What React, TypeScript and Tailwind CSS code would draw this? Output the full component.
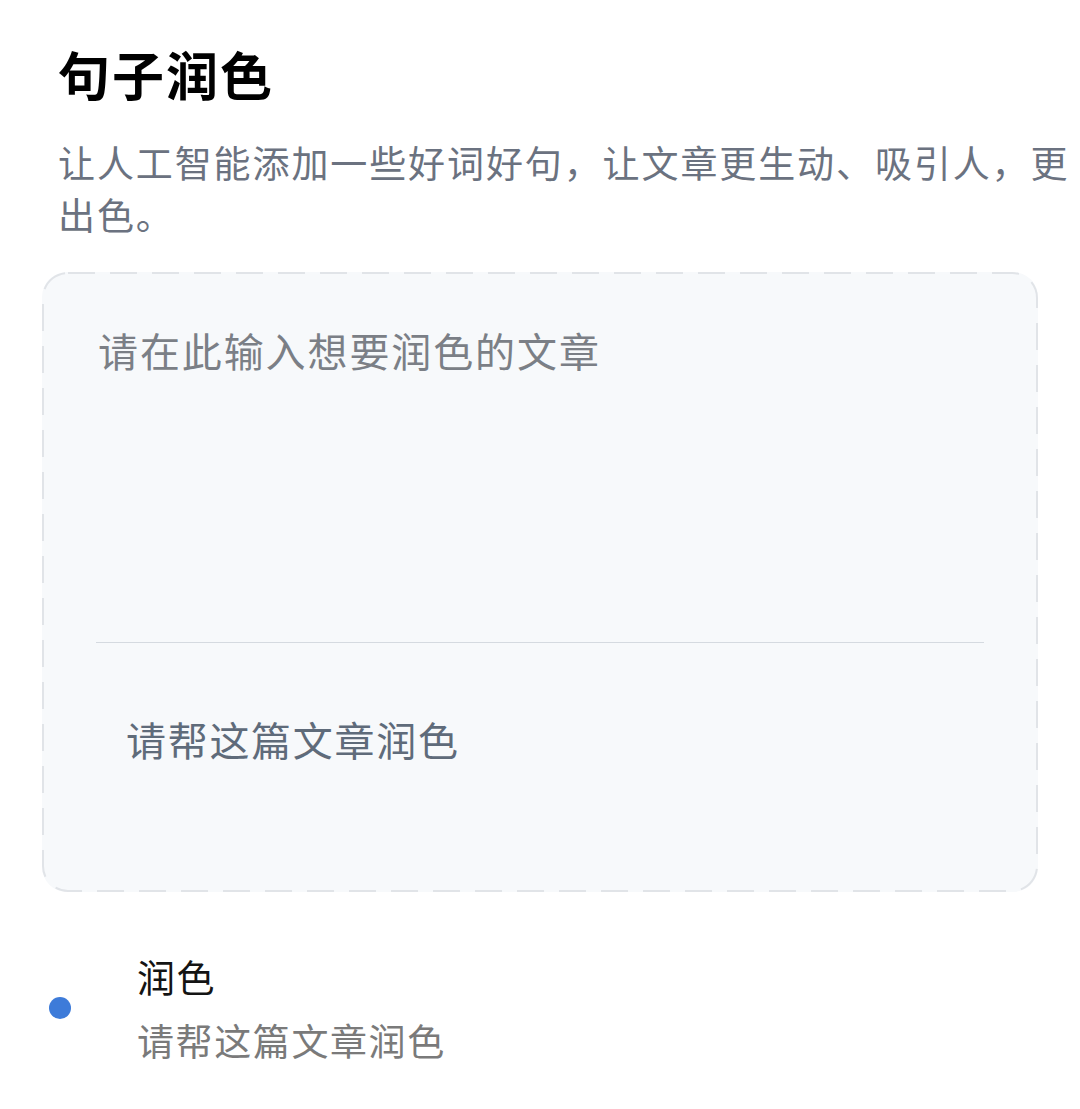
const font = { fontFamily: '"Noto Sans CJK SC", "Noto Sans", sans-serif' }

// dashed outline drawn with svg so the dash length matches the screenshot
function DashedOutline() {
  return (
    <svg className="absolute inset-0 pointer-events-none" width="996" height="620" viewBox="0 0 996 620">
      <rect
        x="1"
        y="1"
        width="994"
        height="618"
        rx="25"
        fill="none"
        stroke="#e1e4e8"
        strokeWidth="2"
        strokeDasharray="27 15"
      />
    </svg>
  )
}

export default function App() {
  return (
    <div style={font} className="w-[1080px] h-[1109px] bg-white overflow-hidden">
      <div className="pl-[58px] pt-[42px]">
        <h1 className="text-[52px] leading-[64px] font-bold text-black tracking-[2px]">句子润色</h1>
        <p className="mt-[30px] text-[37px] leading-[52px] text-[#6b7280] tracking-[1.9px] pr-[4px]">
          让人工智能添加一些好词好句，让文章更生动、吸引人，更出色。
        </p>
      </div>

      <div className="relative mx-[42px] mt-[32px] w-[996px] h-[620px] rounded-[25px] bg-[#f7f9fb] flex flex-col">
        <DashedOutline />
        <div className="px-[56px] pt-[50px] h-[370px]">
          <div className="text-[40px] leading-[56px] text-[#7b7f86] tracking-[1.9px]">请在此输入想要润色的文章</div>
        </div>
        <div className="mx-[54px] h-px bg-[#d5dae0]" />
        <div className="pl-[84px] pt-[68px]">
          <div className="text-[40px] leading-[56px] text-[#5f6b7a] tracking-[1.7px]">请帮这篇文章润色</div>
        </div>
      </div>

      <div className="flex items-center mt-[58px] pl-[49px]">
        <div className="w-[22px] h-[22px] rounded-full bg-[#3d7bd9]" />
        <div className="ml-[66px] flex flex-col">
          <div className="text-[38px] leading-[52px] text-[#141414] tracking-[1.5px]">润色</div>
          <div className="mt-[12px] text-[37px] leading-[52px] text-[#7a7a7a] tracking-[1.6px]">请帮这篇文章润色</div>
        </div>
      </div>
    </div>
  )
}
